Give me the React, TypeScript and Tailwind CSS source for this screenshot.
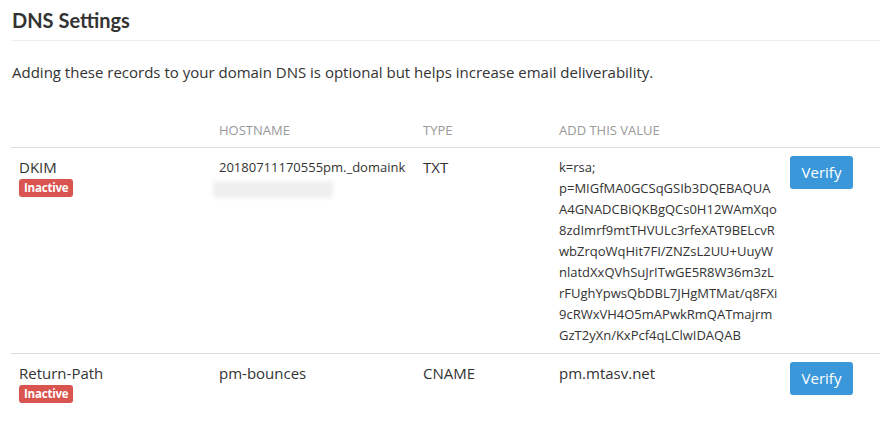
import React from "react";

interface DnsRecord {
  id: number;
  name: string;
  hostname: string;
  hostBlurred: boolean;
  type: string;
  value: string[];
  small: boolean;
}

const records: DnsRecord[] = [
  {
    id: 1,
    name: "DKIM",
    hostname: "20180711170555pm._domaink",
    hostBlurred: true,
    type: "TXT",
    // kept as shown on the page, one chunk per line
    value: [
      "k=rsa;",
      "p=MIGfMA0GCSqGSIb3DQEBAQUA",
      "A4GNADCBiQKBgQCs0H12WAmXqo",
      "8zdImrf9mtTHVULc3rfeXAT9BELcvR",
      "wbZrqoWqHit7FI/ZNZsL2UU+UuyW",
      "nlatdXxQVhSuJrITwGE5R8W36m3zL",
      "rFUghYpwsQbDBL7JHgMTMat/q8FXi",
      "9cRWxVH4O5mAPwkRmQATmajrm",
      "GzT2yXn/KxPcf4qLClwIDAQAB",
    ],
    small: true,
  },
  {
    id: 2,
    name: "Return-Path",
    hostname: "pm-bounces",
    hostBlurred: false,
    type: "CNAME",
    value: ["pm.mtasv.net"],
    small: false,
  },
];

const App: React.FC = () => {
  return (
    <div className="min-h-screen bg-white pl-[11px] text-[#333] font-['Open_Sans',sans-serif]">
      <h2 className="font-['Lato',sans-serif] font-bold text-[20px] leading-[40px] pl-px border-b border-[#eee]">
        DNS Settings
      </h2>
      <p className="mt-[20px] text-[15px] leading-[22px] pl-px">
        Adding these records to your domain DNS is optional but helps increase email deliverability.
      </p>

      <table className="mt-[37px] w-[869px] table-fixed border-collapse">
        <colgroup>
          <col className="w-[200px]" />
          <col className="w-[204px]" />
          <col className="w-[136px]" />
          <col className="w-[231px]" />
          <col />
        </colgroup>
        <thead>
          <tr className="border-b border-[#ddd] text-left text-[13px] uppercase text-[#999]">
            <th className="font-normal px-2 pt-0 pb-[7px] leading-[20px]"></th>
            <th className="font-normal px-2 pt-0 pb-[7px] leading-[20px]">Hostname</th>
            <th className="font-normal px-2 pt-0 pb-[7px] leading-[20px]">Type</th>
            <th className="font-normal px-2 pt-0 pb-[7px] leading-[20px]">Add this value</th>
            <th></th>
          </tr>
        </thead>
        <tbody>
          {records.map((r) => (
            <tr key={r.id} className="border-b border-[#ddd] last:border-b-0 align-top">
              <td className="px-2 pt-[9px] pb-[7px] text-[15px] leading-[21px]">
                <div>{r.name}</div>
                <span className="mt-[1px] block w-fit rounded-[3px] bg-[#d9534f] px-[5px] text-[11.5px] font-bold leading-[18px] text-white tracking-[-0.2px]">
                  Inactive
                </span>
              </td>
              <td className={`px-2 pt-[9px] pb-[7px] leading-[21px] ${r.small ? "text-[13px]" : "text-[15px]"}`}>
                <div>{r.hostname}</div>
                {r.hostBlurred && (
                  <div className="-ml-[6px] mt-[3px] h-[17px] w-[120px] rounded-sm bg-[#efefef] blur-[2px]"></div>
                )}
              </td>
              <td className="px-2 pt-[9px] pb-[7px] text-[15px] leading-[21px]">{r.type}</td>
              <td className={`px-2 pt-[9px] pb-[7px] leading-[21px] ${r.small ? "text-[13px]" : "text-[15px]"}`}>
                {r.value.map((line, i) => (
                  <div key={i} className="whitespace-nowrap">
                    {line}
                  </div>
                ))}
              </td>
              <td className="px-2 pt-[8px] pb-[7px]">
                <button className="h-[33px] w-[63px] rounded-[3px] bg-[#3a97d9] text-[15px] text-white">
                  Verify
                </button>
              </td>
            </tr>
          ))}
        </tbody>
      </table>
    </div>
  );
};

export default App;
